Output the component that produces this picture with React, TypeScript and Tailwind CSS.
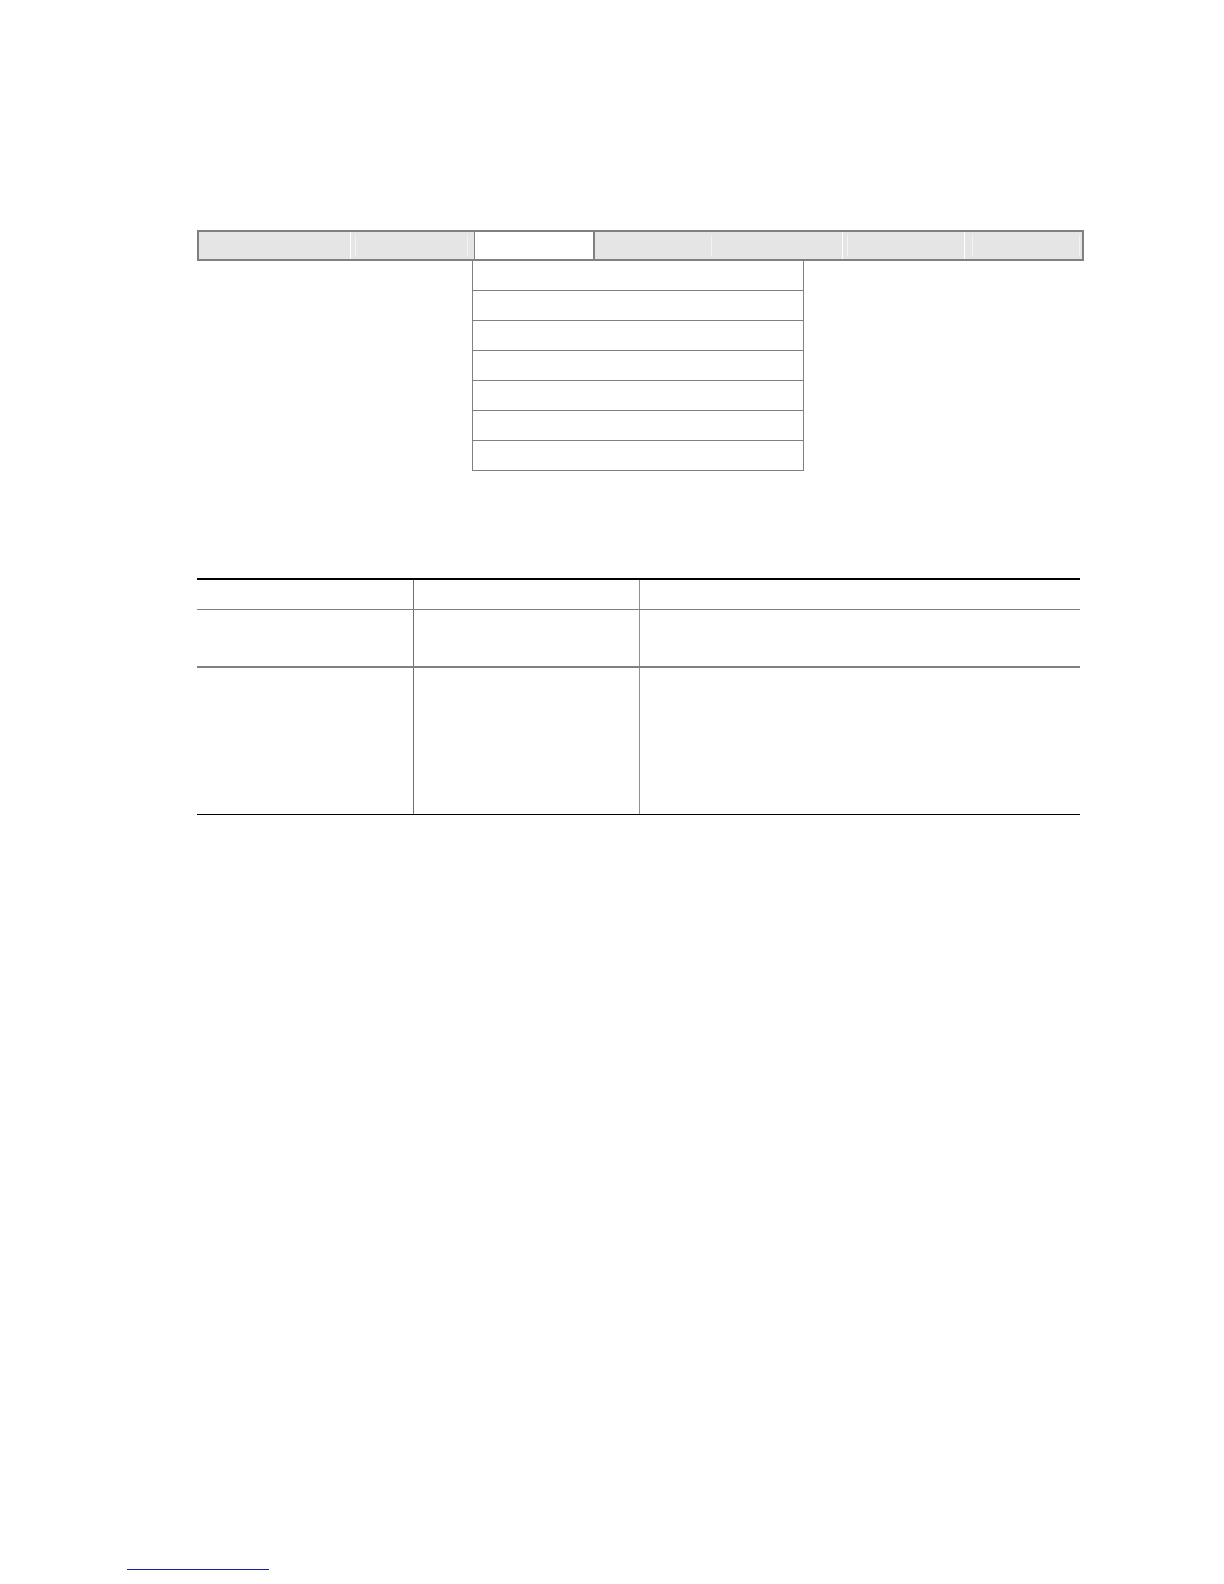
import React from 'react';

type Tab = { w: string; active?: boolean; sep?: boolean; marks?: string[] };

// faint bevel marks inside the grey tabs
const tabs: Tab[] = [
  { w: 'w-[151px]' },
  { w: 'w-[124px]', sep: true, marks: ['left-[4px]', 'right-[6px]'] },
  { w: 'w-[121px]', active: true },
  { w: 'w-[247px]', marks: ['left-[116px]'] },
  { w: 'w-[122px]', sep: true, marks: ['left-[4px]'] },
  { w: 'flex-1', sep: true, marks: ['left-[7px]', 'right-[2px]'] },
];

const MenuBar: React.FC = () => (
  <div className="flex h-[31px] w-[887px] border-2 border-[#808080] bg-[#e5e5e5]">
    {tabs.map((t, i) => (
      <div
        key={i}
        className={
          t.active
            ? `${t.w} h-full bg-white border-r-2 border-l border-[#808080]`
            : `${t.w} h-full relative ${t.sep ? 'border-l border-white' : ''}`
        }
      >
        {t.marks?.map((m, j) => (
          <div key={j} className={`absolute ${m} top-[3px] bottom-[3px] w-px bg-[#f4f4f4]`} />
        ))}
      </div>
    ))}
  </div>
);

const DropDown: React.FC = () => (
  <div className="ml-[275px] flex w-[332px] flex-col">
    {Array.from({ length: 7 }).map((_, i) => (
      <div key={i} className="h-[30px] border-x border-b border-[#808080] bg-white" />
    ))}
  </div>
);

const Row: React.FC<{ h: string; bottom?: string }> = ({ h, bottom = '' }) => (
  <div className={`grid grid-cols-[217px_226px_1fr] ${h} ${bottom}`}>
    <div className="border-r border-[#707070]" />
    <div className="border-r border-[#909090]" />
    <div />
  </div>
);

const Table: React.FC = () => (
  <div className="mt-[107px] w-[883px] border-t-2 border-b border-t-black border-b-black">
    <Row h="h-[30px]" bottom="border-b border-[#808080]" />
    <Row h="h-[58px]" bottom="border-b-2 border-[#808080]" />
    <Row h="h-[146px]" />
  </div>
);

export default function App() {
  return (
    <div className="relative flex min-h-[1584px] w-[1224px] flex-col bg-white" style={{ fontFamily: '"Liberation Sans", Arial, sans-serif' }}>
      <div className="flex flex-col pl-[197px] pt-[230px]">
        <MenuBar />
        <DropDown />
        <Table />
      </div>
      <div className="ml-[127px] mt-[754px] h-px w-[142px] bg-[#1c1ca8]" />
    </div>
  );
}
